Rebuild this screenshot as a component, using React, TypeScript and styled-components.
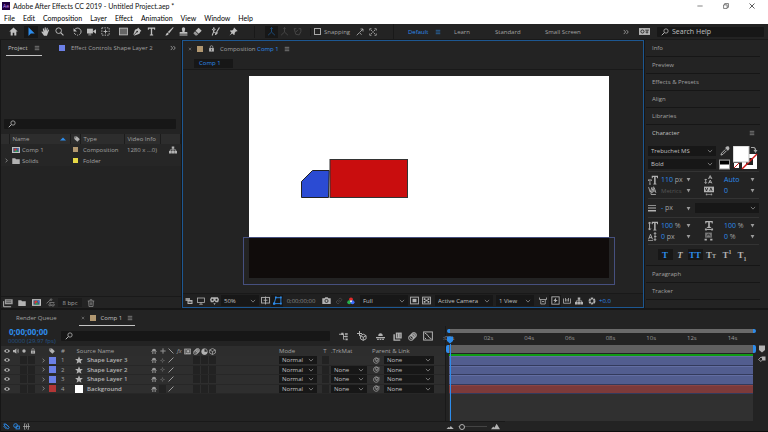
import React from "react";
import styled, { createGlobalStyle, css } from "styled-components";

const c = {
  gap: "#161616",
  panel: "#232323",
  well: "#171717",
  head: "#2d2d2d",
  line: "#191919",
  text: "#a2a2a2",
  bright: "#c0c0c0",
  dim: "#555555",
  blue: "#2d8ceb",
  frame: "#1d5791",
};

const GlobalStyle = createGlobalStyle`
  * { box-sizing: border-box; }
  html, body { margin: 0; background: ${c.gap}; }
  body, button, input, select, table {
    font-family: "Open Sans", "Noto Sans", sans-serif;
    font-size: 6px;
    line-height: 8px;
    color: ${c.text};
  }
  button { background: none; border: 0; padding: 0; margin: 0; white-space: nowrap; }
  h1, h2, h3 { margin: 0; font: inherit; }
`;

/* ---------- icons ---------- */

const S = { fill: "none", stroke: "currentColor", strokeWidth: 1.6 } as const;

const icons: Record<string, React.ReactNode> = {
  home: <path fill="currentColor" d="M8 1 0.5 8.2H3V15h3.6v-4.6h2.8V15H13V8.2h2.5z" />,
  select: <path fill="currentColor" d="M4 0.5v14l3.8-4H14z" />,
  hand: <path fill="currentColor" d="M5.4 15.5 1 9.2c-.7-1 .6-1.9 1.500-1.1l1.900 1.700L3.200 3.400c-.2-1.200 1.300-1.500 1.700-.4l1.500 4L6.600 1.400c0-1.200 1.700-1.200 1.800 0l.4 5.400 1.400-4.600c.4-1.200 1.900-.8 1.700.4l-1 5.200 1.900-2.900c.7-.9 1.900-.2 1.500.8L12 11.600l-1.400 3.900z" />,
  zoom: <g {...S}><circle cx="6.500" cy="6.500" r="5" /><path d="m10 10 5 5" strokeWidth="2" /></g>,
  search: <g {...S}><circle cx="10" cy="6" r="4.300" /><path d="m7 9-5.500 5.500" strokeWidth="2" /></g>,
  rotate: <g {...S}><path d="M3 4.500a6.300 6.300 0 1 1-.8 6" strokeDasharray="22 2 2 2" /><path fill="currentColor" stroke="none" d="M1 2v6h6z" /></g>,
  camera: <g fill="currentColor"><path d="M0 3h10.500v8.500H0z" /><path d="m11 7 5-3v8l-5-3.500z" /><path d="M3 11h4l1 4H2z" opacity=".5" /></g>,
  anchor: <g {...S}><rect x="1.500" y="1.500" width="13" height="13" strokeDasharray="2.500 2" /><path d="M8 4.500v7M4.500 8h7" /></g>,
  rect: <rect x="1" y="2" width="14" height="12" fill="#666" stroke="currentColor" strokeWidth="1.500" />,
  pen: <path fill="currentColor" d="m9 1 6 6-2 1-1.500 4L3 15l-1.500-.5L7 9.500a1.500 1.500 0 1 0-1-1L1 14l-.2-1L3.500 5l4.300-1.800z" />,
  type: <path fill="currentColor" d="M1.500 1h13v4h-1.600l-.6-2H9.200v10l1.800.6V15H5v-1.400l1.800-.6V3H3.700l-.6 2H1.500z" />,
  brush: <path fill="currentColor" d="m15.500 1-8 10-2.500-2L14 .5zM4.200 9.700l2.500 2.200C6 14.500 3 15.500.5 14.600 2.300 13.800 2 11 4.200 9.700z" />,
  stamp: <path fill="currentColor" d="M8 0.500a3 3 0 0 1 2.800 4L9.800 9H14a1 1 0 0 1 1 1v2H1v-2a1 1 0 0 1 1-1h4.200l-1-4.500a3 3 0 0 1 2.800-4zM1 13.300h14v2H1z" />,
  eraser: <g><path fill="currentColor" d="M10 1.200 15.500 6.500 10 12 4.500 6.700z" /><path fill="currentColor" opacity=".75" d="M3.700 7.500 9.200 12.800 7 15H4.500L.5 11z" /></g>,
  roto: <g {...S}><path d="m15 1-5 8" strokeWidth="2" /><path fill="currentColor" d="m10 9 1.500 1.500L8 14l.5-3.500z" /><path d="m2 4 3 2 3-2M5 6 4 10l-2 5M5 9l3 1" strokeWidth="1.800" /><circle cx="5" cy="2" r="1.500" fill="currentColor" stroke="none" /></g>,
  pin: <path fill="currentColor" d="m9 .8 6.200 6.200-1.200.8-1.500-.3-2.500 3 .2 2.700-1.400 1L6 11.500.8 15.200 4.500 10 1.800 7.200l1-1.400 2.700.2 3-2.500L8.200 2z" />,
  axis: <g {...S}><path d="M8 1v8L2 14.500M8 9l6 5.500M6 3l2-2 2 2" /></g>,
  cube: <g {...S}><path d="M2 3h4M10 3h4v5M2 3l3 10 6 1 3-6M9 5 5 9" /></g>,
  snapA: <g {...S}><path d="M1.500 14.500 7 9l4 4.500M8 8l6-6M9 2h5v5" /></g>,
  expand: <g {...S}><path d="M1.500 5V1.500H5M11 1.500h3.500V5M1.500 11v3.500H5M14.500 11v3.500H11M4 4l3 3M12 4 9 7M4 12l3-3M12 12 9 9" /></g>,
  menu: <path {...S} d="M2 3.500h12M2 8h12M2 12.500h12" strokeWidth="1.500" />,
  more: <path {...S} d="m2 2.500 5 5.500-5 5.500M9 2.500l5 5.500-5 5.500" strokeWidth="2" />,
  badge: <g><rect x="0" y="3" width="16" height="10" fill="#b5b5b5" /><circle cx="5" cy="8" r="2.300" fill="none" stroke="#222" strokeWidth="1.300" /><path d="M9 6h5.500M11.700 6v5M9.500 9h4" stroke="#222" strokeWidth="1.100" fill="none" /></g>,
  down: <path {...S} d="m2.500 5 5.500 6L13.500 5" />,
  right: <path {...S} d="m5 2.500 6 5.500-6 5.500" strokeWidth="2" />,
  solidDown: <path fill="currentColor" d="M2 3h12L8 14z" />,
  solidUp: <path fill="currentColor" d="M0 12h16L8 4z" />,
  lock: <g><rect x="2.500" y="7" width="11" height="8" fill="currentColor" /><path {...S} d="M5 7V4.500a3 3 0 0 1 6 0V7" /><path d="M8 9v4" stroke="#222" strokeWidth="1.500" /></g>,
  tag: <g><path fill="currentColor" d="M1 1h7l7.500 7.500-6.500 6.500L1 8z" /><circle cx="4.500" cy="4.500" r="1.200" fill="#222" /></g>,
  comp: <g><rect x="0" y="2" width="16" height="12" fill="#c0c0c0" /><rect x="2.500" y="4" width="11" height="8" fill="#405a78" /><circle cx="7" cy="7.500" r="2.500" fill="#d33" /><path d="m8 7 4 5H6z" fill="#2f9f56" /><path d="M10 5h3v5z" fill="#3b6be0" /></g>,
  folder: <path fill="currentColor" d="M0.500 2.500h6l1.500 2h7.500v9.500H.5z" />,
  tree: <g fill="currentColor"><path d="M5.500 1h5v4.500h-5zM0 10h5v5H0zM5.500 10h5v5h-5zM11 10h5v5h-5z" /><path {...S} d="M8 5v5M2.500 10V7.700h11V10" /></g>,
  interpret: <g><rect x="3" y="2" width="12.500" height="8" fill="#999" /><path d="M1 5v9h12" {...S} /><path d="M5 4.500h8M5 7h8" stroke="#333" /></g>,
  flow: <g {...S}><path d="M1 9.500 8 3M6 8h9M8 12l5 3" /><circle cx="9" cy="3" r="1.500" /><circle cx="7" cy="12" r="2" /><circle cx="13.500" cy="12" r="1.500" /></g>,
  trash: <g {...S}><path d="M1.500 4h13M6 3.500V1.500h4v2M3.200 4l.8 11h8l.8-11M6.500 6.500v6M9.500 6.500v6" /></g>,
  stack: <g><path fill="currentColor" d="M1 2h9v6H1z" opacity=".8" /><path fill="currentColor" d="M5 6h10v8H5z" /><path d="M7 9h6v3H7z" fill="#444" /></g>,
  monitor: <g {...S}><rect x="1" y="2" width="14" height="9" /><path d="M8 11v3M4.500 14.500h7" /></g>,
  goggles: <g><path fill="currentColor" d="M2 2h12l2 4-1.500 5H10L8 8.500 6 11H1.500L0 6z" /><circle cx="4.500" cy="6.800" r="1.700" fill="#222" /><circle cx="11.500" cy="6.800" r="1.700" fill="#222" /><path fill="currentColor" d="M6 13h4l-2 3z" /></g>,
  grid: <g {...S}><rect x="1" y="2.500" width="14" height="10" /><path d="M8 1v14M4.500 7.500h7" /></g>,
  mask: <g {...S}><path d="M2 13.500 5 3h9v10.500z" /><path fill="currentColor" stroke="none" d="M0 11.500h4v4H0zM3.500 1h3v3h-3zM12.500 1h3v3h-3zM12.500 12h3v3h-3z" /></g>,
  photo: <g><path fill="currentColor" d="M0.500 4H4.500L6 2h4l1.500 2h4v10H.5z" /><circle cx="8" cy="8.800" r="2.800" fill="none" stroke="#222" strokeWidth="1.500" /></g>,
  link: <g {...S}><path d="M7 5 10 2l4 3-4 5M9 11l-3 3-4-4 4-4M6 9l4-2" /></g>,
  rgb: <g><circle cx="8" cy="5" r="4" fill="#e02a2a" /><circle cx="4.500" cy="10.500" r="4" fill="#24b04a" /><circle cx="11" cy="10.500" r="4" fill="#3b6bff" /><circle cx="8" cy="8.500" r="1.800" fill="#fff" /></g>,
  roi: <g><rect x="1" y="2" width="14" height="12" {...S} /><rect x="4.500" y="5" width="7" height="6" fill="currentColor" /></g>,
  checker: <g><rect x="1" y="2" width="14" height="12" {...S} /><path fill="currentColor" d="M3 4h3v3H3zM10 4h3v3h-3zM6 6.500h4v3H6zM3 9h3v3H3zM10 9h3v3h-3z" /></g>,
  aspect: <g {...S}><path d="M1 1v4h14V1M3.500 5v9h9V5M6 9h4" /></g>,
  fast: <g {...S}><rect x="1.500" y="1.500" width="13" height="13" /><path fill="currentColor" stroke="none" d="m9 3-5 6h3l-1 4 6-6H9z" /></g>,
  chart: <g {...S}><path d="M1 3v9.500h14V3M5 2v7M8 4v5M11 2v7" /></g>,
  shutter: <circle cx="8" cy="8" r="5" fill="none" stroke="currentColor" strokeWidth="4" strokeDasharray="4.200 1" />,
  eye: <g><path fill="currentColor" d="M0 8c4-6.500 12-6.500 16 0-4 6.500-12 6.500-16 0z" /><circle cx="8" cy="8" r="3.200" fill="#222" /><circle cx="8" cy="8" r="1.300" fill="currentColor" /></g>,
  speaker: <g><path fill="currentColor" d="M0 5h4l5-4v14l-5-4H0z" /><path {...S} d="M11 4c2 2 2 6 0 8M13 2c3 3 3 9 0 12" /></g>,
  dot: <circle cx="8" cy="8" r="4.500" fill="currentColor" />,
  star: <path fill="currentColor" d="m8 .5 2.200 5.300 5.600.4-4.300 3.700 1.400 5.600L8 12.400l-4.900 3.100 1.400-5.600L.2 6.200l5.600-.4z" />,
  shy: <g><path fill="currentColor" d="M3 8a5 6 0 0 1 10 0zM0.500 9h15v1.800H.5zM3.500 11h3v4h-3zM9.500 11h3v4h-3z" /><path d="M8 2v13" stroke="#222" strokeWidth="1" /></g>,
  sun: <g {...S}><circle cx="8" cy="8" r="3" strokeWidth="2" /><path d="M8 .5V4M8 12v3.500M.5 8H4M12 8h3.500" /></g>,
  slash: <path {...S} d="M14.500 1.500 1.500 14.500" strokeWidth="2.200" />,
  back: <path {...S} d="m1.500 1.500 13 13" strokeWidth="2.200" />,
  film: <g><rect x="0.500" y="1.500" width="15" height="13" fill="currentColor" /><path d="M3 3v10M6 4h7v7H6z" stroke="#222" strokeWidth="1.300" fill="none" /></g>,
  blur: <g {...S}><circle cx="10.500" cy="5.500" r="4.500" fill="currentColor" fillOpacity=".5" /><circle cx="8" cy="8" r="4.500" /><circle cx="5.500" cy="10.500" r="4.500" /></g>,
  half: <g><circle cx="8" cy="8" r="6.500" {...S} /><path fill="currentColor" d="M8 1.500v7h6.500A6.500 6.500 0 0 1 1.500 9 6.500 6.500 0 0 1 8 1.500z" /></g>,
  box: <g {...S}><path d="m8 1 6.500 3.500v7L8 15l-6.500-3.500v-7zM1.500 4.500 8 8l6.500-3.500M8 8v7" /></g>,
  whip: <g fill="none" stroke="currentColor" strokeWidth="1.500"><path d="M8 8.500a1.500 1.500 0 1 1 1.600 1.500A3.600 3.600 0 1 1 12 6.500M13.500 2v6a6.200 6.200 0 1 1-2.500-4.800" /></g>,
  branch: <g {...S}><path d="M0 4h8M8 4v9h2M8 8h3" /><path fill="currentColor" stroke="none" d="M4 1.500h4v4H4zM10.500 2h5v3h-5zM10.500 6.500h5v3h-5zM11.500 11.500h4v3h-4z" /></g>,
  draft: <g {...S}><path d="m10 5 4.500 2.500v5L10 15l-4.500-2.500v-5zM5.500 7.500 10 10l4.500-2.500M10 10v5" /><path d="M4 0v8M0 4h8" /></g>,
  shyBig: <g fill="currentColor"><path d="M4 7a4 5 0 0 1 8 0zM0 9h16v2H0zM2 12h3v2H2zM6.500 12h3v2h-3zM11 12h3v2h-3z" /></g>,
  frames: <g><rect x="5" y="1" width="10.500" height="10.500" fill="currentColor" /><path d="M2 4v10.500h11" {...S} strokeWidth="2.500" /><path d="M8 3v6.500M12.500 3v6.500" stroke="#333" /></g>,
  graph: <g {...S}><rect x="1" y="1.500" width="14" height="13" /><path d="M3 3.500c4 0 6 8.500 10.500 9M3 11l2 2" /></g>,
  marker: <path fill="currentColor" d="M2 1h12v9l-6 5-6-5z" />,
  button: <g><path d="M7 3h8v8H9z" fill="currentColor" /><path {...S} d="m6 4 4 4-4 5-5-4z" /></g>,
  mountainS: <path fill="currentColor" d="m1 12 4-4 2 1.500L9.500 6l6 6z" />,
  mountainL: <path fill="currentColor" d="m0 13 4-5 2 2 4-7 6 10z" />,
  layersA: <g {...S}><path d="m2 2 5 1 7 7-3 4-7-7zM6 2l8 7M1 7l7 7" strokeWidth="2" /></g>,
  layersB: <g {...S}><circle cx="6" cy="6" r="4.500" strokeWidth="2" /><rect x="7" y="7" width="7.500" height="6.500" strokeWidth="2" /></g>,
  braces: <g {...S}><path d="M5.500 1.500H3.500V14.500h2M10.500 1.500h2v13h-2M0 8h16M8 3v10" /></g>,
  dropper: <g><path fill="currentColor" d="M9 2c2-2.500 5.500-2 5.500 0 1.500 1.500 0 4-2 5.500l-4-4z" /><path {...S} d="M8.500 5.500 2.500 11.500 1.500 14.500l3-1 6-6" /></g>,
  strokeW: <path fill="currentColor" d="M0 2h16v1.500H0zM0 7h16v2H0zM0 12h16v3H0z" />,
  sizeT: <path fill="currentColor" d="M0 7h6v2.500H5L4.500 8.500H3.700V14h1v1H1.500v-1h1V8.500H1.500L1 9.500H0zM6 1h10v4h-1.300l-.7-2h-1.800v10.500l1.300.5v1H8.500v-1l1.300-.5V3H8l-.7 2H6z" />,
  leading: <g><path {...S} d="M3 7v8M1 9l2-2 2 2M1 13l2 2 2-2M8 7l3-6 3 6M9 5h4M8 15l3-6 3 6M9 13h4" /></g>,
  kern: <g {...S}><path d="m1 2 3 9 3-9M8 12l3-9 3 9M9 9h4M10 1 5 14M5 15h9" /></g>,
  track: <g><rect x="0" y="1" width="16" height="9" fill="currentColor" /><path d="M3 13.500h10M5 12l-2 1.500L5 15M11 12l2 1.500L11 15" stroke="currentColor" fill="none" /><path d="m2 3 2 5 2-5M9 8l2-5 2 5" stroke="#222" strokeWidth="1.300" fill="none" /></g>,
  vScale: <g><path {...S} d="M2.500 2v12M.5 4l2-2.500 2 2.500M.5 12l2 2.500 2-2.500" /><path fill="currentColor" d="M6 1h10v4h-1.300l-.7-2h-1.800v10.500l1.300.5v1H8.500v-1l1.300-.5V3H8l-.7 2H6z" /></g>,
  hScale: <g><path fill="currentColor" d="M2 0h12v4h-1.500L12 2H9.300v7l1.700.5V11H5V9.500L6.700 9V2H4l-.5 2H2z" /><path {...S} d="M2 13.500h12M4 11.500l-2.500 2L4 15.500M12 11.500l2.500 2-2.500 2" /></g>,
  baseline: <g {...S}><path d="m1 13 3.500-9L8 13M2 10h5M0 15.500h9M12.500 1v14M10.500 3.500l2-2.500 2 2.500M11 8h4M10.500 12.500l2 2.500 2-2.500" /></g>,
  tsume: <g><path fill="currentColor" d="M2 1h12v9H2z" opacity=".6" /><path d="m4 8 4-5 4 5M5 5h6" stroke="#222" fill="none" /><path fill="currentColor" d="M1 12h4v3H1zM11 12h4v3h-4z" /></g>,
  close: <path {...S} d="m3 3 10 10M13 3 3 13" />,
  min: <path {...S} d="M1 8h14" />,
  restore: <g {...S}><path d="M1.500 5h9.500v9.500H1.500zM4.500 5V1.500h10v10H11" /></g>,
};

const Glyph = styled.svg<{ $s: number; $c?: string }>`
  width: ${(p) => p.$s}px;
  height: ${(p) => p.$s}px;
  flex: none;
  display: block;
  color: ${(p) => p.$c ?? "#b2b2b2"};
`;
const Icon = ({ n, s = 9, color }: { n: string; s?: number; color?: string }) => (
  <Glyph viewBox="0 0 16 16" $s={s} $c={color} aria-hidden="true">{icons[n]}</Glyph>
);

/* ---------- shared parts ---------- */

const Shell = styled.div`
  min-height: 100vh;
  display: grid;
  grid-template-rows: 24px 16px minmax(0, 1fr) auto;
  background: ${c.gap};
`;
const Swatch = styled.span<{ $c: string; $s?: number }>`
  display: block;
  flex: none;
  width: ${(p) => p.$s ?? 6}px;
  height: ${(p) => p.$s ?? 6}px;
  background: ${(p) => p.$c};
`;
const IconButton = styled.button<{ $w?: number; $on?: boolean }>`
  width: ${(p) => p.$w ?? 12}px;
  height: 12px;
  flex: none;
  display: grid;
  place-items: center;
  background: ${(p) => (p.$on ? c.well : "none")};
`;
const PickBox = styled.span<{ $w?: string; $h?: number }>`
  display: grid;
  align-items: center;
  flex: none;
  width: ${(p) => p.$w ?? "100%"};
  height: ${(p) => p.$h ?? 9}px;
  background: ${c.well};
  > * { grid-area: 1 / 1; }
  > svg { justify-self: end; margin-right: 3px; pointer-events: none; }
`;
const PickSelect = styled.select`
  appearance: none;
  width: 100%;
  height: 100%;
  background: none;
  border: 0;
  padding: 0 0 0 3px;
  color: ${c.bright};
`;
const Pick = ({ label, value, w, h }: { label: string; value: string; w?: string; h?: number }) => (
  <PickBox $w={w} $h={h}>
    <PickSelect aria-label={label} defaultValue={value}><option>{value}</option></PickSelect>
    <Icon n="down" s={6} />
  </PickBox>
);
const SearchBox = styled.label`
  display: flex;
  align-items: center;
  gap: 3px;
  height: 10px;
  padding: 0 4px;
  background: ${c.well};
  border-radius: 1px;
`;
const SearchInput = styled.input`
  flex: 1;
  min-width: 0;
  height: 10px;
  background: none;
  border: 0;
  padding: 0;
  outline: 0;
  font-size: 7px;
  &::placeholder { color: ${c.bright}; opacity: 1; }
`;

/* ---------- title and menu ---------- */

const TitleArea = styled.header`
  background: #fff;
  display: grid;
  grid-template-rows: 12px 12px;
`;
const TitleBar = styled.div`
  display: flex;
  align-items: center;
  padding: 0 10px 0 2px;
  gap: 3px;
`;
const Logo = styled.span`
  width: 8px;
  height: 8px;
  display: grid;
  place-items: center;
  background: #1f0040;
  color: #cf96fd;
  font-size: 5px;
  line-height: 6px;
`;
const Title = styled.h1`
  flex: 1;
  color: #111;
  font-family: Lato, "Open Sans", sans-serif;
  font-size: 7px;
`;
const WindowButtons = styled.div`
  display: flex;
  gap: 14px;
`;
const MenuBar = styled.nav`
  display: flex;
  align-items: center;
  gap: 8px;
  padding-left: 4px;
`;
const MenuItem = styled.button`
  color: #000;
  font-family: Lato, "Open Sans", sans-serif;
  font-size: 7px;
`;

/* ---------- toolbar ---------- */

const ToolBar = styled.div`
  display: flex;
  align-items: center;
  padding: 0 4px;
  background: ${c.panel};
  border-bottom: 1px solid ${c.line};
`;
const ToolGroup = styled.div<{ $cut?: boolean }>`
  display: flex;
  padding: 0 2px;
  ${(p) => p.$cut && css`border-left: 1px solid ${c.line}; margin-left: 12px; padding-left: 10px;`}
`;
const SnapLabel = styled.label`
  display: flex;
  align-items: center;
  gap: 3px;
  padding: 0 3px;
  border-left: 1px solid ${c.line};
  margin-left: 4px;
`;
const SnapCheck = styled.input`
  appearance: none;
  width: 7px;
  height: 7px;
  margin: 0;
  border: 1px solid #a8a8a8;
`;
const Workspaces = styled.nav`
  margin-left: auto;
  height: 15px;
  display: grid;
  grid-template-columns: 27px 19px 41px 50px 78px 12px;
  align-items: center;
  justify-items: start;
  padding-left: 14px;
  border-left: 1px solid ${c.line};
`;
const Workspace = styled.button<{ $on?: boolean }>`
  color: ${(p) => (p.$on ? c.blue : c.text)};
`;
const HelpArea = styled.div`
  display: grid;
  grid-template-columns: 18px 107px;
  align-items: center;
  padding-left: 4px;
`;

/* ---------- panels ---------- */

const Panels = styled.main`
  display: grid;
  grid-template-columns: 180px minmax(0, 1fr) 123px;
  gap: 1px;
  padding-left: 1px;
  padding-bottom: 2px;
`;
const Panel = styled.section`
  background: ${c.panel};
  display: flex;
  flex-direction: column;
  min-width: 0;
`;
const Tabs = styled.div<{ $pad?: number }>`
  display: flex;
  align-items: center;
  height: 16px;
  padding: 0 ${(p) => p.$pad ?? 5}px;
`;
const Tab = styled.div<{ $on?: boolean; $gap?: number; $inset?: number }>`
  display: flex;
  align-items: center;
  height: 15px;
  gap: ${(p) => p.$gap ?? 6}px;
  padding: 0 2px;
  margin: 0 ${(p) => p.$inset ?? 0}px;
  white-space: nowrap;
  color: ${(p) => (p.$on ? c.bright : c.text)};
  border-bottom: 1px solid ${(p) => (p.$on ? "#c4c4c4" : "transparent")};
`;
const Push = styled.span`
  flex: 1;
`;

const ProjectSearch = styled.div`
  margin: 63px 5px 5px 3px;
`;
const ProjectTable = styled.table`
  width: 100%;
  table-layout: fixed;
  border-collapse: collapse;
  th, td {
    height: 11px;
    padding: 0 0 0 3px;
    text-align: left;
    font-weight: 400;
    white-space: nowrap;
  }
  th { height: 10px; background: ${c.head}; border-right: 1px solid #1c1c1c; }
  td { background: #262626; }
`;
const Cell = styled.span`
  display: flex;
  align-items: center;
  gap: 2px;
`;
const Spread = styled(Cell)`
  justify-content: space-between;
  padding-right: 4px;
`;
const ProjectFoot = styled.footer`
  margin-top: auto;
  height: 12px;
  display: flex;
  align-items: center;
  gap: 2px;
  padding-left: 1px;
  border-top: 1px solid ${c.line};
`;
const Depth = styled.button`
  width: 24px;
  height: 9px;
  background: #1c1c1c;
  margin-right: 1px;
`;

/* ---------- composition ---------- */

const CompPanel = styled(Panel)`
  border: 1px solid ${c.frame};
`;
const Crumbs = styled.div`
  display: flex;
  align-items: center;
  height: 13px;
  padding-left: 11px;
  border-bottom: 1px solid ${c.line};
`;
const Crumb = styled.button`
  width: 39px;
  height: 9px;
  padding-left: 5px;
  text-align: left;
  background: ${c.well};
  color: ${c.blue};
`;
const Blue = styled.span`
  color: ${c.blue};
`;
const Viewer = styled.div`
  flex: 1;
  display: grid;
  place-items: center;
  padding: 0 0 2px 32px;
`;
const Artwork = styled.svg`
  display: block;
  width: 372px;
  height: 210px;
`;
const CompFoot = styled.footer`
  height: 14px;
  display: flex;
  align-items: center;
  border-top: 1px solid ${c.line};
  background: #202020;
`;
const Time = styled.button`
  width: 36px;
  color: #8a8a8a;
`;
const FootGap = styled.span`
  width: 3px;
`;

/* ---------- right column ---------- */

const SideTitle = styled.h2<{ $on?: boolean }>`
  height: 17px;
  display: flex;
  align-items: center;
  justify-content: space-between;
  margin: 0 8px 0 1px;
  padding: 0 5px 0 6px;
  color: ${(p) => (p.$on ? c.bright : c.text)};
  border-bottom: 1px solid ${(p) => (p.$on ? "transparent" : "#161616")};
`;
const CharBody = styled.div`
  margin: 0 8px 0 1px;
  padding: 4px 1px 3px 2px;
  border-bottom: 1px solid #161616;
`;
const FontArea = styled.div`
  display: grid;
  grid-template-columns: 68px 15px 25px;
  gap: 1px;
  height: 23px;
`;
const Stack = styled.div`
  display: grid;
  grid-template-rows: 10px 10px;
  gap: 3px;
  justify-items: center;
`;
const Rule = styled.hr`
  border: 0;
  border-top: 1px solid #333;
  margin: 2px 0;
`;
const CharRow = styled.div`
  height: 11px;
  display: grid;
  grid-template-columns: 13px 25px 18px 20px 26px 1fr;
  align-items: center;
`;
const StrokeRow = styled(CharRow)`
  height: 14px;
  grid-template-columns: 13px 25px 9px 1fr;
`;
const Value = styled.span<{ $off?: boolean }>`
  color: ${(p) => (p.$off ? c.dim : c.text)};
  font-size: ${(p) => (p.$off ? 6 : 7)}px;
  white-space: nowrap;
  b { font-weight: 400; color: ${c.blue}; }
`;
const Faux = styled.div`
  display: grid;
  grid-template-columns: 15px 15px 15px 17px 15px 15px;
  grid-template-rows: 11px;
  justify-content: center;
  align-content: center;
  height: 15px;
`;
const FauxButton = styled.button<{ $on?: boolean }>`
  font-family: "Liberation Serif", serif;
  font-size: 9px;
  line-height: 10px;
  font-weight: 700;
  color: ${(p) => (p.$on ? c.blue : "#b2b2b2")};
  background: ${(p) => (p.$on ? c.well : "none")};
  small, sup, sub { font-size: 6px; line-height: 0; }
`;

/* ---------- timeline ---------- */

const Timeline = styled.section`
  margin-left: 1px;
  background: ${c.panel};
  border-bottom: 1px solid #0e0e0e;
`;
const TimelineBody = styled.div`
  display: grid;
  grid-template-columns: 444px minmax(0, 1fr);
`;
const Layers = styled.div`
  display: flex;
  flex-direction: column;
`;
const TimeBar = styled.div`
  height: 20px;
  display: grid;
  grid-template-columns: 54px minmax(0, 1fr) 115px;
  align-items: center;
  padding-left: 6px;
`;
const Clock = styled.div`
  color: ${c.blue};
  font-size: 8px;
  line-height: 10px;
  font-weight: 700;
  padding-left: 2px;
`;
const Fps = styled.div`
  color: #24568a;
  font-size: 6px;
  line-height: 9px;
  padding-left: 1px;
`;
const BarIcons = styled.div`
  display: grid;
  grid-template-columns: 18px 19px 17px 15px 15px 1fr;
  align-items: center;
  padding-left: 9px;
`;
const LayerTable = styled.table`
  display: block;
  th, td { padding: 0; font-weight: 400; text-align: left; min-width: 0; white-space: nowrap; }
  thead, th, td { display: block; }
  tbody { display: grid; grid-template-rows: repeat(4, 1fr); height: 38px; }
  tr {
    display: grid;
    grid-template-columns: 10px 8px 8px 9px 12px 12px 14px 75px 67px minmax(0, 1fr) 40px 12px 38px 15px 51px;
    align-items: center;
    padding: 0 10px 0 1px;
  }
  thead tr { height: 10px; background: ${c.head}; }
  tbody tr { background: #2e2e2e; border-bottom: 1px solid #272727; }
`;
const Mid = styled.span`
  display: grid;
  place-items: center;
`;
const Hole = styled.span`
  display: block;
  width: 7px;
  height: 8px;
  background: #222;
`;
const Switches = styled.span`
  display: grid;
  grid-template-columns: repeat(8, 1fr);
  place-items: center;
`;
const LayerName = styled.span`
  display: flex;
  align-items: center;
  gap: 4px;
  color: #b4b4b4;
  font-weight: 600;
`;
const LayerFoot = styled.footer`
  height: 10px;
  display: flex;
  align-items: center;
  gap: 3px;
  padding-left: 2px;
  border-top: 1px solid ${c.line};
`;

const Graph = styled.div`
  position: relative;
  display: grid;
  grid-template-columns: minmax(0, 1fr) 12px;
  border-left: 1px solid ${c.line};
`;
const Tracks = styled.div`
  display: flex;
  flex-direction: column;
  padding-top: 3px;
`;
const Navigator = styled.div`
  height: 4px;
  background: #6a6a6a;
  border: solid ${c.blue};
  border-width: 0 3px;
  border-radius: 3px;
  margin: 0 0 0 1px;
`;
const Ruler = styled.div`
  height: 12px;
  margin: 0 2px 0 3px;
  display: grid;
  grid-template-columns: repeat(7, 2fr) 1fr;
`;
const Mark = styled.span`
  margin-left: -6px;
  padding-top: 1px;
  color: #9a9a9a;
`;
const WorkArea = styled.div`
  height: 8px;
  background: #606060;
  border: solid ${c.blue};
  border-width: 0 3px;
  border-radius: 2px;
`;
const Lane = styled.div`
  margin: 1px 3px 0 3px;
  border-top: 2px solid #0f9a14;
  display: grid;
  grid-template-rows: repeat(4, 1fr);
  height: 40px;
`;
const Clip = styled.div<{ $c: string; $e: string }>`
  background: ${(p) => p.$c};
  border-top: 1px solid ${(p) => p.$e};
  border-bottom: 1px solid #333a5c;
`;
const Empty = styled.div`
  height: 27px;
  margin: 0 3px;
  background: #303030;
`;
const Playhead = styled.div`
  position: absolute;
  left: 0;
  top: 10px;
  bottom: 0;
  width: 7px;
  display: grid;
  grid-template-rows: 8px 1fr;
  justify-items: center;
`;
const PlayLine = styled.span`
  width: 1px;
  background: ${c.blue};
`;
const GraphSide = styled.div`
  display: grid;
  grid-template-rows: 10px 12px;
  align-content: start;
  justify-items: center;
  padding-top: 19px;
`;
const ZoomBar = styled.div`
  display: flex;
  align-items: center;
  gap: 4px;
  width: 60px;
  padding-left: 1px;
  border-top: 1px solid ${c.line};
`;
const ZoomRange = styled.input`
  appearance: none;
  width: 29px;
  height: 6px;
  margin: 0;
  background: linear-gradient(#444, #444) center / 100% 1px no-repeat;
  &::-webkit-slider-thumb {
    appearance: none;
    width: 6px;
    height: 6px;
    border: 1px solid #b0b0b0;
    border-radius: 50%;
    background: ${c.panel};
  }
`;

/* ---------- data ---------- */

const menus = ["File", "Edit", "Composition", "Layer", "Effect", "Animation", "View", "Window", "Help"];
const toolGroups = [
  ["home"],
  ["select", "hand", "zoom"],
  ["rotate", "camera", "anchor"],
  ["rect", "pen", "type"],
  ["brush", "stamp", "eraser"],
  ["roto"],
  ["pin"],
];
const layers = [
  { id: 1, name: "Shape Layer 3", color: "#6c80e6", star: true, matte: false },
  { id: 2, name: "Shape Layer 2", color: "#6c80e6", star: true, matte: true },
  { id: 3, name: "Shape Layer 1", color: "#6c80e6", star: true, matte: true },
  { id: 4, name: "Background", color: "#b23636", star: false, matte: true },
];
const seconds = [":00s", "02s", "04s", "06s", "08s", "10s", "12s", "14s"];

const Arrow = () => <Icon n="solidDown" s={5} color="#9c9c9c" />;

export default function App() {
  return (
    <Shell>
      <GlobalStyle />
      <TitleArea>
        <TitleBar>
          <Logo>Ae</Logo>
          <Title>Adobe After Effects CC 2019 - Untitled Project.aep *</Title>
          <WindowButtons>
            <IconButton aria-label="Minimize"><Icon n="min" s={6} color="#333" /></IconButton>
            <IconButton aria-label="Restore"><Icon n="restore" s={6} color="#333" /></IconButton>
            <IconButton aria-label="Close"><Icon n="close" s={8} color="#333" /></IconButton>
          </WindowButtons>
        </TitleBar>
        <MenuBar>{menus.map((m) => <MenuItem key={m}>{m}</MenuItem>)}</MenuBar>
      </TitleArea>

      <ToolBar>
        {toolGroups.map((g) => (
          <ToolGroup key={g[0]}>
            {g.map((t) => (
              <IconButton key={t} $w={14} $on={t === "select"} aria-label={t}>
                <Icon n={t} s={t === "select" ? 10 : 9} color={t === "select" ? c.blue : "#c0c0c0"} />
              </IconButton>
            ))}
          </ToolGroup>
        ))}
        <ToolGroup $cut>
          <IconButton $w={13} $on aria-label="Local axis"><Icon n="axis" s={9} color="#1d4f80" /></IconButton>
          <IconButton $w={13} aria-label="World axis"><Icon n="axis" s={9} color="#484848" /></IconButton>
          <IconButton $w={13} aria-label="View axis"><Icon n="cube" s={9} color="#484848" /></IconButton>
        </ToolGroup>
        <SnapLabel><SnapCheck type="checkbox" />Snapping</SnapLabel>
        <IconButton $w={13} aria-label="Snap edges"><Icon n="snapA" s={8} /></IconButton>
        <IconButton $w={13} aria-label="Snap features"><Icon n="expand" s={8} /></IconButton>
        <Workspaces>
          <Workspace $on>Default</Workspace>
          <Icon n="menu" s={6} color={c.blue} />
          <Workspace>Learn</Workspace>
          <Workspace>Standard</Workspace>
          <Workspace>Small Screen</Workspace>
          <Icon n="more" s={6} />
        </Workspaces>
        <HelpArea>
          <Icon n="badge" s={11} />
          <SearchBox>
            <Icon n="search" s={8} />
            <SearchInput aria-label="Search Help" placeholder="Search Help" />
          </SearchBox>
        </HelpArea>
      </ToolBar>

      <Panels>
        <Panel>
          <Tabs>
            <Tab $on>Project<Icon n="menu" s={6} /></Tab>
            <Push />
            <Tab><Swatch $c="#6c80e6" />Effect Controls Shape Layer 2</Tab>
            <Push />
            <Icon n="more" s={6} />
          </Tabs>
          <ProjectSearch>
            <SearchBox><Icon n="search" s={8} /><SearchInput aria-label="Search project" /></SearchBox>
          </ProjectSearch>
          <ProjectTable>
            <colgroup>
              <col width="8" /><col width="61" /><col width="10" /><col width="44" /><col width="36" /><col />
            </colgroup>
            <thead>
              <tr>
                <th /><th><Spread>Name<Icon n="solidUp" s={6} color={c.blue} /></Spread></th>
                <th><Icon n="tag" s={6} /></th><th>Type</th><th>Video Info</th><th />
              </tr>
            </thead>
            <tbody>
              <tr>
                <td /><td><Cell><Icon n="comp" s={8} />Comp 1</Cell></td>
                <td><Swatch $c="#b19770" $s={5} /></td><td>Composition</td><td>1280 x ...0)</td>
                <td><Spread><span /><Icon n="tree" s={8} /></Spread></td>
              </tr>
              <tr>
                <td><Icon n="right" s={5} /></td><td><Cell><Icon n="folder" s={8} />Solids</Cell></td>
                <td><Swatch $c="#e6d845" $s={5} /></td><td>Folder</td><td /><td />
              </tr>
            </tbody>
          </ProjectTable>
          <ProjectFoot>
            <IconButton aria-label="Interpret footage"><Icon n="interpret" s={10} /></IconButton>
            <IconButton aria-label="New folder"><Icon n="folder" s={8} /></IconButton>
            <IconButton aria-label="New composition"><Icon n="comp" s={9} /></IconButton>
            <IconButton aria-label="Project settings"><Icon n="flow" s={9} color="#777" /></IconButton>
            <Depth>8 bpc</Depth>
            <IconButton aria-label="Delete"><Icon n="trash" s={8} color="#888" /></IconButton>
          </ProjectFoot>
        </Panel>

        <CompPanel>
          <Tabs $pad={3}>
            <Tab $gap={5}>
              <Icon n="close" s={4} /><Swatch $c="#b19770" /><Icon n="lock" s={7} />
              <span>Composition <Blue>Comp 1</Blue></span>
              <Icon n="menu" s={6} />
            </Tab>
          </Tabs>
          <Crumbs><Crumb>Comp 1</Crumb></Crumbs>
          <Viewer>
            <Artwork viewBox="0 0 372 210" role="img" aria-label="Truck composition">
              <rect x="6" y="0" width="360" height="162" fill="#fff" />
              <rect x="6" y="161" width="360" height="41" fill="#100c0b" />
              <rect x="0.500" y="161.500" width="371" height="47" fill="none" stroke="#46507f" />
              <path d="M58.500 105.500 69.500 94.500H86.200L85.500 121.500H58.500z" fill="#2b4bd3" stroke="#222" />
              <rect x="87" y="83.500" width="77.500" height="38" fill="#c90d0e" stroke="#333" />
            </Artwork>
          </Viewer>
          <CompFoot>
            <IconButton aria-label="Always preview"><Icon n="stack" s={8} /></IconButton>
            <IconButton aria-label="Primary viewer"><Icon n="monitor" s={8} /></IconButton>
            <IconButton $w={14} aria-label="Adaptive"><Icon n="goggles" s={9} /></IconButton>
            <Pick label="Magnification" value="50%" w="38px" h={11} />
            <IconButton aria-label="Guides"><Icon n="grid" s={9} /></IconButton>
            <IconButton $on aria-label="Mask visibility"><Icon n="mask" s={9} color={c.blue} /></IconButton>
            <Time>0;00;00;00</Time>
            <IconButton $w={14} aria-label="Snapshot"><Icon n="photo" s={9} /></IconButton>
            <IconButton aria-label="Show snapshot"><Icon n="link" s={8} color="#484848" /></IconButton>
            <IconButton aria-label="Channels"><Icon n="rgb" s={8} /></IconButton>
            <FootGap />
            <Pick label="Resolution" value="Full" w="48px" h={11} />
            <IconButton aria-label="Region of interest"><Icon n="roi" s={9} /></IconButton>
            <IconButton aria-label="Transparency"><Icon n="checker" s={9} /></IconButton>
            <FootGap />
            <Pick label="3D view" value="Active Camera" w="58px" h={11} />
            <FootGap />
            <Pick label="View layout" value="1 View" w="38px" h={11} />
            <FootGap />
            <IconButton aria-label="Pixel aspect"><Icon n="aspect" s={8} /></IconButton>
            <IconButton $on aria-label="Fast previews"><Icon n="fast" s={9} /></IconButton>
            <IconButton aria-label="Timeline"><Icon n="chart" s={8} /></IconButton>
            <IconButton aria-label="Flowchart"><Icon n="tree" s={8} /></IconButton>
            <IconButton $w={14} aria-label="Exposure"><Icon n="shutter" s={8} /></IconButton>
            <Blue>+0.0</Blue>
          </CompFoot>
        </CompPanel>

        <Panel>
          {["Info", "Preview", "Effects & Presets", "Align", "Libraries"].map((t) => <SideTitle key={t}>{t}</SideTitle>)}
          <SideTitle $on>Character<Icon n="menu" s={6} /></SideTitle>
          <CharBody>
            <FontArea>
              <Stack>
                <Pick label="Font" value="Trebuchet MS" h={10} />
                <Pick label="Style" value="Bold" h={10} />
              </Stack>
              <Stack>
                <Icon n="dropper" s={10} />
                <Glyph viewBox="0 0 11 10" $s={11}>
                  <rect x="0.500" y="0.500" width="10" height="9" fill="#fff" stroke="#999" />
                  <rect x="1" y="1" width="9" height="4" fill="#000" />
                </Glyph>
              </Stack>
              <Glyph viewBox="0 0 25 25" $s={25}>
                <path d="M9 8h15v15H9z" fill="#fff" />
                <path d="M13 12h7v7h-7z" fill="#232323" />
                <path d="M9 23 24 8" stroke="#d01818" strokeWidth="1.500" />
                <path d="M0 0h16v16H0z" fill="#fff" stroke="#bbb" />
                <path d="M1 17h5v5H1z" fill="#fff" /><path d="m1 22 5-5" stroke="#d01818" />
                <path d="M18 1.500h2.500q2 0 2 3" stroke="#a8a8a8" strokeWidth="1.200" fill="none" /><path d="M20.500 4h4l-2 3z" fill="#a8a8a8" />
              </Glyph>
            </FontArea>
            <Rule />
            <CharRow>
              <Icon n="sizeT" s={10} /><Value><b>110</b> px</Value><Arrow />
              <Icon n="leading" s={9} /><Value><b>Auto</b></Value><Arrow />
            </CharRow>
            <CharRow>
              <Icon n="kern" s={9} /><Value $off>Metrics</Value><Arrow />
              <Icon n="track" s={10} /><Value><b>0</b></Value><Arrow />
            </CharRow>
            <Rule />
            <StrokeRow>
              <Icon n="strokeW" s={8} /><Value><b>-</b> px</Value><Arrow />
              <Pick label="Stroke order" value="" h={10} />
            </StrokeRow>
            <Rule />
            <CharRow>
              <Icon n="vScale" s={10} /><Value><b>100</b> %</Value><Arrow />
              <Icon n="hScale" s={10} /><Value><b>100</b> %</Value><Arrow />
            </CharRow>
            <CharRow>
              <Icon n="baseline" s={9} /><Value><b>0</b> px</Value><Arrow />
              <Icon n="tsume" s={9} /><Value><b>0</b> %</Value><Arrow />
            </CharRow>
            <Rule />
            <Faux>
              <FauxButton $on>T</FauxButton>
              <FauxButton><i>T</i></FauxButton>
              <FauxButton $on>TT</FauxButton>
              <FauxButton>T<small>T</small></FauxButton>
              <FauxButton>T<sup>1</sup></FauxButton>
              <FauxButton>T<sub>1</sub></FauxButton>
            </Faux>
          </CharBody>
          <SideTitle>Paragraph</SideTitle>
          <SideTitle>Tracker</SideTitle>
        </Panel>
      </Panels>

      <Timeline>
        <Tabs>
          <Tab $inset={8}>Render Queue</Tab>
          <Tab $on $gap={5} $inset={12}><Icon n="close" s={4} /><Swatch $c="#b19770" />Comp 1<Icon n="menu" s={6} /></Tab>
        </Tabs>
        <TimelineBody>
          <Layers>
            <TimeBar>
              <div>
                <Clock>0;00;00;00</Clock>
                <Fps>00000 (29.97 fps)</Fps>
              </div>
              <SearchBox><Icon n="search" s={8} /><SearchInput aria-label="Search layers" /></SearchBox>
              <BarIcons>
                <Icon n="branch" s={9} /><Icon n="draft" s={10} /><Icon n="shyBig" s={9} />
                <Icon n="frames" s={9} /><Icon n="blur" s={9} /><Icon n="graph" s={10} />
              </BarIcons>
            </TimeBar>
            <LayerTable>
              <thead>
                <tr>
                  <th><Mid><Icon n="eye" s={6} /></Mid></th>
                  <th><Mid><Icon n="speaker" s={6} /></Mid></th>
                  <th><Mid><Icon n="dot" s={6} /></Mid></th>
                  <th><Mid><Icon n="lock" s={6} /></Mid></th>
                  <th />
                  <th><Icon n="tag" s={6} /></th>
                  <th>#</th>
                  <th>&nbsp;Source Name</th>
                  <th>
                    <Switches>
                      {["shy", "sun", "back"].map((n) => <Icon key={n} n={n} s={6} />)}
                      <i>fx</i>
                      {["film", "blur", "half", "box"].map((n) => <Icon key={n} n={n} s={7} />)}
                    </Switches>
                  </th>
                  <th />
                  <th>Mode</th>
                  <th><Mid>T</Mid></th>
                  <th>.TrkMat</th>
                  <th>&nbsp;&nbsp;Parent &amp; Link</th>
                  <th />
                </tr>
              </thead>
              <tbody>
                {layers.map((l) => (
                  <tr key={l.id}>
                    <td><Mid><Icon n="eye" s={6} /></Mid></td>
                    <td />
                    <td><Hole /></td>
                    <td><Hole /></td>
                    <td><Mid><Icon n="right" s={5} /></Mid></td>
                    <td><Swatch $c={l.color} $s={7} /></td>
                    <td>{l.id}</td>
                    <td>
                      <LayerName>
                        {l.star ? <Icon n="star" s={8} /> : <Swatch $c="#fff" $s={8} />}
                        {l.name}
                      </LayerName>
                    </td>
                    <td>
                      <Switches>
                        <Icon n="shy" s={6} />
                        {l.star ? <Icon n="sun" s={5} color="#777" /> : <Hole />}
                        <Icon n="slash" s={6} />
                        <span /><span />
                        <Hole /><Hole /><Hole />
                      </Switches>
                    </td>
                    <td />
                    <td><Pick label={`Mode of ${l.name}`} value="Normal" w="38px" h={8} /></td>
                    <td><Mid><Hole /></Mid></td>
                    <td>{l.matte && <Pick label={`Track matte of ${l.name}`} value="None" w="36px" h={8} />}</td>
                    <td><Mid><Icon n="whip" s={7} /></Mid></td>
                    <td><Pick label={`Parent of ${l.name}`} value="None" w="50px" h={8} /></td>
                  </tr>
                ))}
              </tbody>
            </LayerTable>
          </Layers>
          <Graph>
            <Tracks>
              <Navigator />
              <Ruler>{seconds.map((s) => <Mark key={s}>{s}</Mark>)}</Ruler>
              <WorkArea />
              <Lane>
                {layers.map((l) => (
                  <Clip key={l.id} $c={l.star ? "#525d8f" : "#7c3a3a"} $e={l.star ? "#626da2" : "#8a4444"} />
                ))}
              </Lane>
              <Empty />
            </Tracks>
            <GraphSide>
              <Icon n="marker" s={8} />
              <Icon n="button" s={8} />
            </GraphSide>
            <Playhead>
              <Icon n="marker" s={8} color={c.blue} />
              <PlayLine />
            </Playhead>
          </Graph>
        </TimelineBody>
        <TimelineBody>
          <LayerFoot>
            <Icon n="layersA" s={7} color={c.blue} />
            <Icon n="layersB" s={7} color={c.blue} />
            <Icon n="braces" s={7} />
          </LayerFoot>
          <ZoomBar>
            <Icon n="mountainS" s={8} />
            <ZoomRange type="range" min="0" max="100" defaultValue="5" aria-label="Timeline zoom" />
            <Icon n="mountainL" s={9} />
          </ZoomBar>
        </TimelineBody>
      </Timeline>
    </Shell>
  );
}
